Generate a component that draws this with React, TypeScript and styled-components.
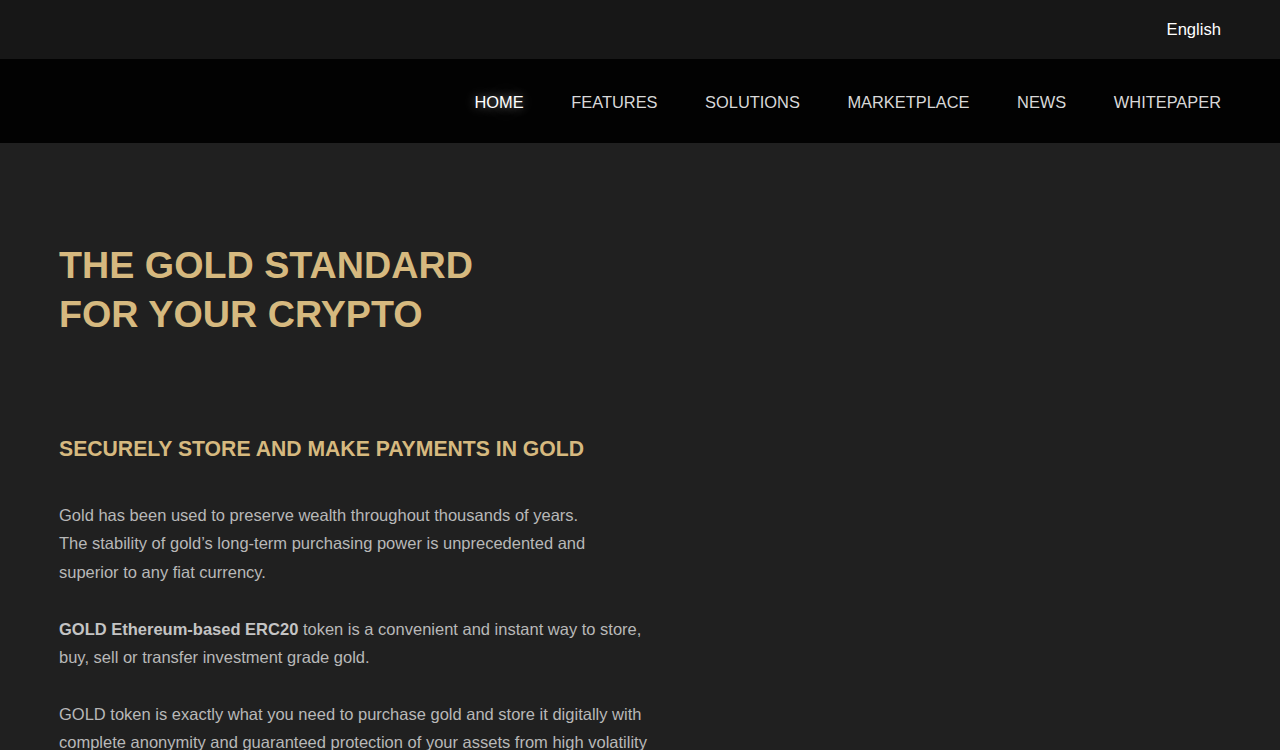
import React from 'react';
import styled, { createGlobalStyle } from 'styled-components';

const GlobalStyle = createGlobalStyle`
  html, body {
    margin: 0;
    padding: 0;
    background: #202020;
    font-family: 'Liberation Sans', Arial, sans-serif;
  }
`;

const TopBar = styled.div`
  height: 59px;
  background: #171717;
  display: flex;
  align-items: center;
  justify-content: flex-end;
  padding: 0 59px;
`;

const LangLink = styled.a`
  color: #ffffff;
  font-size: 16.6px;
  text-decoration: none;
  cursor: pointer;
`;

const NavBar = styled.nav`
  height: 84px;
  background: #020202;
  display: flex;
  align-items: center;
  justify-content: flex-end;
  padding: 2px 59px 0;
  box-sizing: border-box;
  gap: 47.6px;
`;

const NavItem = styled.a<{ $active?: boolean }>`
  font-size: 16.4px;
  text-transform: uppercase;
  text-decoration: none;
  color: ${(p) => (p.$active ? '#ffffff' : '#d8d8d8')};
  text-shadow: ${(p) =>
    p.$active ? '0 0 10px rgba(255,255,255,0.45), 0 0 28px rgba(255,255,255,0.3)' : 'none'};
  cursor: pointer;
`;

const Main = styled.main`
  padding: 98px 59px 60px;
`;

const Column = styled.div`
  max-width: 589px;
`;

const Title = styled.h1`
  margin: 0 0 96px;
  font-size: 37.7px;
  line-height: 49px;
  font-weight: 700;
  color: #d6b97f;
`;

const Subtitle = styled.h2`
  margin: 0 0 38px;
  font-size: 21.2px;
  line-height: 28px;
  font-weight: 700;
  color: #d6b97f;
`;

const Para = styled.p`
  margin: 0 0 28.5px;
  font-size: 16.5px;
  line-height: 28.4px;
  color: #b8b8b8;

  b {
    color: #c4c4c4;
  }
`;

const navItems = ['Home', 'Features', 'Solutions', 'Marketplace', 'News', 'Whitepaper'];

function App() {
  return (
    <>
      <GlobalStyle />
      <TopBar>
        <LangLink>English</LangLink>
      </TopBar>
      <NavBar>
        {navItems.map((item, i) => (
          <NavItem key={item} $active={i === 0}>
            {item}
          </NavItem>
        ))}
      </NavBar>
      <Main>
        <Column>
          <Title>
            THE GOLD STANDARD
            <br />
            FOR YOUR CRYPTO
          </Title>
          <Subtitle>SECURELY STORE AND MAKE PAYMENTS IN GOLD</Subtitle>
          <Para>
            Gold has been used to preserve wealth throughout thousands of years.
            <br />
            The stability of gold’s long-term purchasing power is unprecedented and superior to any
            fiat currency.
          </Para>
          <Para>
            <b>GOLD Ethereum-based ERC20</b> token is a convenient and instant way to store, buy,
            sell or transfer investment grade gold.
          </Para>
          <Para>
            GOLD token is exactly what you need to purchase gold and store it digitally with
            complete anonymity and guaranteed protection of your assets from high volatility of
            cryptocurrency markets.
          </Para>
        </Column>
      </Main>
    </>
  );
}

export default App;
